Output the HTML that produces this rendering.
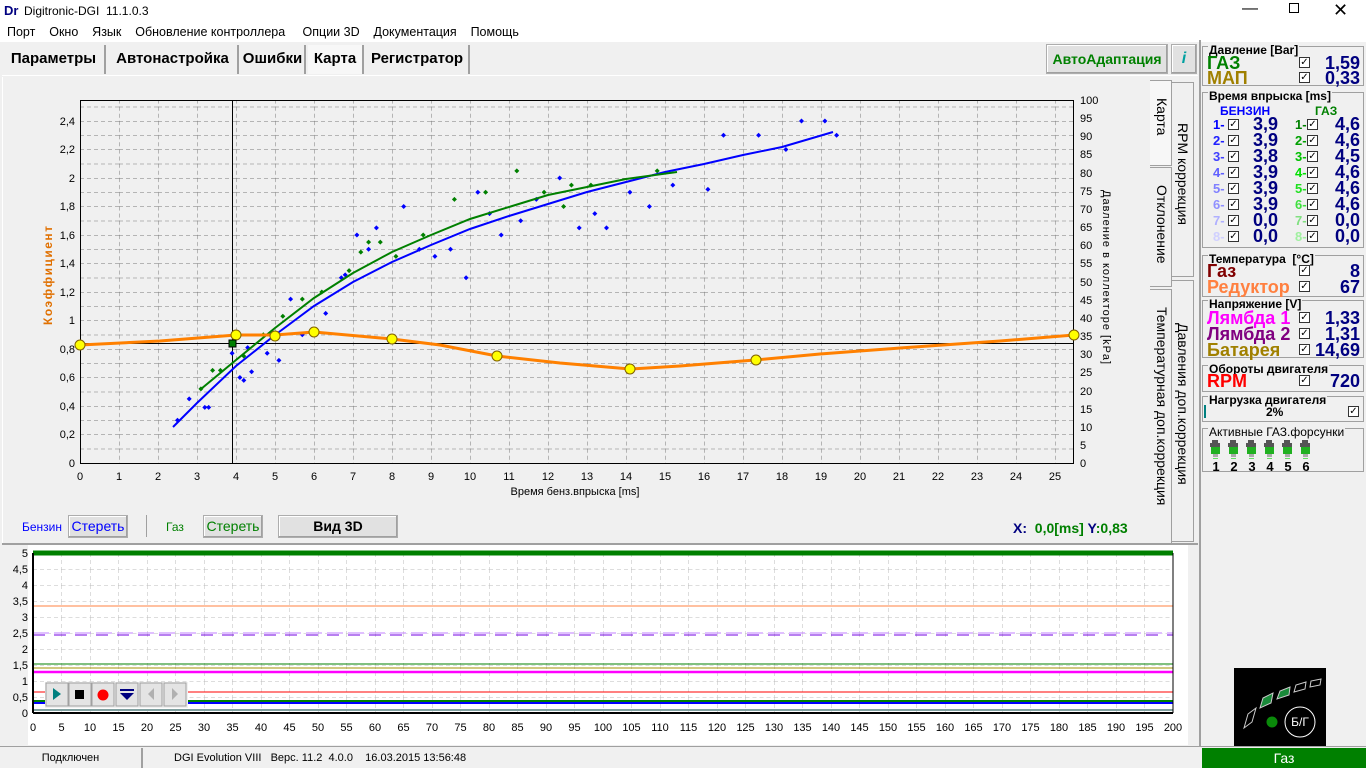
<!DOCTYPE html>
<html><head><meta charset="utf-8"><style>
*{margin:0;padding:0;box-sizing:border-box}
body{width:1366px;height:768px;overflow:hidden;background:#f0f0f0;font-family:"Liberation Sans",sans-serif;position:relative;font-size:12px}
.a{position:absolute}
.btn{position:absolute;background:#e1e1e1;border:1px solid #adadad;box-shadow:inset -1px -1px #a0a0a0,inset 1px 1px #fff;text-align:center}
.tab{position:absolute;top:45px;height:29px;font-weight:bold;font-size:15px;line-height:28px;border-right:2px solid #a0a0a0;text-align:center;color:#000}
.grp{position:absolute;left:1202px;width:162px;border:1px solid #a0a0a0}
.gt{position:absolute;top:-3px;left:5px;background:#f0f0f0;font-weight:bold;font-size:12px;line-height:12px;padding:0 1px}
.cb{position:absolute;width:11px;height:11px;border:1px solid #333;background:#fff;font-size:10px;line-height:9px;text-align:center}
.big{position:absolute;font-size:18px;font-weight:bold;line-height:17px}
.num{position:absolute;font-size:18px;font-weight:bold;color:#000080;line-height:17px;text-align:right}
.vt{position:absolute;writing-mode:vertical-rl;font-size:14px}
</style></head><body>
<div class="a" style="left:0;top:0;width:1366px;height:22px;background:#fff"></div>
<div class="a" style="left:4px;top:3px;font-weight:bold;color:#000080;font-size:13px">Dr</div>
<div class="a" style="left:24px;top:4px;font-size:12px">Digitronic-DGI&nbsp; 11.1.0.3</div>
<div class="a" style="left:1242px;top:0;font-size:16px">&#8212;</div>
<div class="a" style="left:1289px;top:3px;width:10px;height:10px;border:1px solid #000"></div>
<div class="a" style="left:1333px;top:0;font-size:18px">&#10005;</div>
<div class="a" style="left:0;top:22px;width:1366px;height:20px;background:#fff"></div>
<div class="a" style="left:7px;top:25px;font-size:12.5px;word-spacing:0">Порт&nbsp;&nbsp;&nbsp; Окно&nbsp;&nbsp;&nbsp; Язык&nbsp;&nbsp;&nbsp; Обновление контроллера&nbsp;&nbsp;&nbsp;&nbsp; Опции 3D&nbsp;&nbsp;&nbsp; Документация&nbsp;&nbsp;&nbsp; Помощь</div>
<div class="tab" style="left:3px;width:103px">Параметры</div>
<div class="tab" style="left:108px;width:131px">Автонастройка</div>
<div class="tab" style="left:241px;width:65px">Ошибки</div>
<div class="tab" style="left:308px;width:56px;background:#f7f7f7">Карта</div>
<div class="tab" style="left:366px;width:104px">Регистратор</div>
<div class="a" style="left:2px;top:75px;width:1196px;height:1px;background:#fff"></div>
<div class="btn" style="left:1046px;top:44px;width:122px;height:30px;color:#008000;font-weight:bold;font-size:14px;line-height:28px">АвтоАдаптация</div>
<div class="btn" style="left:1171px;top:44px;width:26px;height:30px;color:#00a0a0;font-weight:bold;font-style:italic;font-size:16px;line-height:28px">i</div>
<div class="a" style="left:2px;top:77px;width:1148px;height:466px;border-left:1px solid #fff"></div>
<div class="a" style="left:1150px;top:80px;width:22px;height:86px;background:#f7f7f7;border:1px solid #a0a0a0;border-left:none"></div>
<div class="vt" style="left:1154px;top:98px">Карта</div>
<div class="a" style="left:1172px;top:82px;width:22px;height:195px;border:1px solid #a0a0a0;border-left:none"></div>
<div class="vt" style="left:1175px;top:123px">RPM коррекция</div>
<div class="a" style="left:1150px;top:167px;width:22px;height:120px;border:1px solid #a0a0a0;border-left:none"></div>
<div class="vt" style="left:1154px;top:185px">Отклонение</div>
<div class="a" style="left:1150px;top:289px;width:22px;height:255px;border:1px solid #a0a0a0;border-left:none"></div>
<div class="vt" style="left:1154px;top:307px">Температурная доп.коррекция</div>
<div class="a" style="left:1172px;top:280px;width:22px;height:262px;border:1px solid #a0a0a0;border-left:none"></div>
<div class="vt" style="left:1175px;top:323px">Давления доп.коррекция</div>

<svg class="a" style="left:0;top:0" width="1150" height="545">
<defs>
<pattern id="g" x="80" y="463" width="39" height="14.25" patternUnits="userSpaceOnUse">
<line x1="0" y1="0" x2="39" y2="0" stroke="#777" stroke-dasharray="4,3"/>
<line x1="0" y1="0" x2="0" y2="14.25" stroke="#777" stroke-dasharray="4,3"/>
</pattern>
</defs>
<rect x="80" y="100" width="994" height="363" fill="url(#g)"/>
<rect x="80.5" y="100.5" width="993" height="363" fill="none" stroke="#000"/>
<g font-size="11" fill="#000" text-anchor="middle">
<text x="80" y="480">0</text><text x="119" y="480">1</text><text x="158" y="480">2</text><text x="197" y="480">3</text><text x="236" y="480">4</text><text x="275" y="480">5</text><text x="314" y="480">6</text><text x="353" y="480">7</text><text x="392" y="480">8</text><text x="431" y="480">9</text><text x="470" y="480">10</text><text x="509" y="480">11</text><text x="548" y="480">12</text><text x="587" y="480">13</text><text x="626" y="480">14</text><text x="665" y="480">15</text><text x="704" y="480">16</text><text x="743" y="480">17</text><text x="782" y="480">18</text><text x="821" y="480">19</text><text x="860" y="480">20</text><text x="899" y="480">21</text><text x="938" y="480">22</text><text x="977" y="480">23</text><text x="1016" y="480">24</text><text x="1055" y="480">25</text>
</g>
<g font-size="11" text-anchor="end">
<text x="75" y="467">0</text><text x="75" y="438">0,2</text><text x="75" y="410">0,4</text><text x="75" y="381">0,6</text><text x="75" y="353">0,8</text><text x="75" y="324">1</text><text x="75" y="296">1,2</text><text x="75" y="267">1,4</text><text x="75" y="239">1,6</text><text x="75" y="210">1,8</text><text x="75" y="182">2</text><text x="75" y="153">2,2</text><text x="75" y="125">2,4</text>
</g>
<g font-size="11">
<text x="1080" y="467">0</text><text x="1080" y="449">5</text><text x="1080" y="431">10</text><text x="1080" y="413">15</text><text x="1080" y="395">20</text><text x="1080" y="376">25</text><text x="1080" y="358">30</text><text x="1080" y="340">35</text><text x="1080" y="322">40</text><text x="1080" y="304">45</text><text x="1080" y="286">50</text><text x="1080" y="267">55</text><text x="1080" y="249">60</text><text x="1080" y="231">65</text><text x="1080" y="213">70</text><text x="1080" y="195">75</text><text x="1080" y="177">80</text><text x="1080" y="158">85</text><text x="1080" y="140">90</text><text x="1080" y="122">95</text><text x="1080" y="104">100</text>
</g>
<text x="575" y="495" font-size="11" text-anchor="middle">Время бенз.впрыска [ms]</text>
<text transform="translate(52,325) rotate(-90)" font-size="12" font-weight="bold" fill="#e07000" letter-spacing="1.5">Коэффициент</text>
<text transform="translate(1103,190) rotate(90)" font-size="11" letter-spacing="1">Давление в коллекторе [kPa]</text>
<line x1="232.5" y1="100" x2="232.5" y2="463" stroke="#000"/>
<line x1="80" y1="343.5" x2="1074" y2="343.5" stroke="#000"/>
<g id="sc"></g>
<polyline fill="none" stroke="#0000ff" stroke-width="2" points="173,427 197,403 236,366 275,335 314,306 353,282 392,262 431,245 470,229 509,216 548,204 587,192 626,182 665,172 704,164 743,155 782,147 833,132"/>
<polyline fill="none" stroke="#008000" stroke-width="2" points="201,389 236,360 275,328 314,298 353,273 392,252 431,235 470,219 509,207 548,195 587,187 626,179 677,172"/>
<polyline fill="none" stroke="#ff8000" stroke-width="3" points="80,345 160,341 236,335 275,335 314,332 392,339 440,345 497,356 560,363 630,369 680,366 755,360 820,354 900,348 1000,341 1074,335"/>
<g fill="#ffff00" stroke="#806000"><circle cx="80" cy="345" r="5"/><circle cx="236" cy="335" r="5"/><circle cx="275" cy="336" r="5"/><circle cx="314" cy="332" r="5"/><circle cx="392" cy="339" r="5"/><circle cx="497" cy="356" r="5"/><circle cx="630" cy="369" r="5"/><circle cx="756" cy="360" r="5"/><circle cx="1074" cy="335" r="5"/></g>
<rect x="229" y="340" width="7" height="7" fill="#008000" stroke="#000"/>
</svg>
<script>
var s='',b=[[2.5,.3],[2.8,.45],[3.2,.39],[3.3,.39],[3.9,.77],[4.1,.6],[4.2,.58],[4.3,.81],[4.4,.64],[4.8,.77],[5.1,.72],[5.4,1.15],[5.7,.9],[6.3,1.05],[6.7,1.3],[7.1,1.6],[7.4,1.5],[7.6,1.65],[8.3,1.8],[9.1,1.45],[9.5,1.5],[9.9,1.3],[10.2,1.9],[10.8,1.6],[11.3,1.7],[11.7,1.85],[12.3,2],[12.8,1.65],[13.5,1.65],[14.1,1.9],[14.6,1.8],[15.2,1.95],[16.1,1.92],[16.5,2.3],[17.4,2.3],[18.1,2.2],[18.5,2.4],[19.1,2.4],[19.4,2.3],[6.8,1.32],[10.5,1.75],[13.2,1.75],[8.7,1.5]],g=[[3.1,.52],[3.4,.65],[3.6,.65],[4.2,.75],[4.7,.9],[5.2,1.03],[5.7,1.15],[6.2,1.2],[6.9,1.35],[7.4,1.55],[7.7,1.55],[8.1,1.45],[8.8,1.6],[9.6,1.85],[10.4,1.9],[11.2,2.05],[12.6,1.95],[13.1,1.95],[14.8,2.05],[11.9,1.9],[12.4,1.8],[7.2,1.48]];
function d(p,c){var x=80+39*p[0],y=463-142.5*p[1];return '<path d="M'+x+','+(y-2.5)+' l2.5,2.5 l-2.5,2.5 l-2.5,-2.5z" fill="'+c+'"/>';}
b.forEach(function(p){s+=d(p,'#0000ff')});g.forEach(function(p){s+=d(p,'#008000')});
document.getElementById('sc').innerHTML=s;
</script>
<div class="a" style="left:22px;top:520px;color:#0000ff;font-size:12px">Бензин</div>
<div class="btn" style="left:68px;top:515px;width:60px;height:23px;color:#0000ff;font-size:14px;line-height:21px">Стереть</div>
<div class="a" style="left:146px;top:515px;width:1px;height:22px;background:#a0a0a0"></div>
<div class="a" style="left:166px;top:520px;color:#008000;font-size:12px">Газ</div>
<div class="btn" style="left:203px;top:515px;width:60px;height:23px;color:#008000;font-size:14px;line-height:21px">Стереть</div>
<div class="btn" style="left:278px;top:515px;width:120px;height:23px;font-weight:bold;font-size:14px;line-height:21px">Вид 3D</div>
<div class="a" style="left:1013px;top:520px;font-size:14px;font-weight:bold;color:#008000"><span style="color:#000080">X:</span>&nbsp; 0,0[ms] <span style="color:#000080">Y</span>:0,83</div>

<div class="a" style="left:2px;top:543px;width:1196px;height:2px;background:#a0a0a0"></div>
<svg class="a" style="left:0;top:545px" width="1198" height="202">
<rect x="28" y="0" width="1160" height="200" fill="#fff"/>
<defs><pattern id="g2" x="33" y="8" width="28.5" height="16" patternUnits="userSpaceOnUse">
<line x1="0" y1="0" x2="28.5" y2="0" stroke="#bbb" stroke-dasharray="4,3"/>
<line x1="0" y1="0" x2="0" y2="16" stroke="#bbb" stroke-dasharray="4,3"/></pattern></defs>
<rect x="33" y="8" width="1140" height="160" fill="url(#g2)"/>
<line x1="33" y1="8" x2="1173" y2="8" stroke="#008000" stroke-width="5"/>
<line x1="33" y1="61" x2="1173" y2="61" stroke="#ff8040"/>
<line x1="33" y1="88" x2="1173" y2="88" stroke="#c080ff" stroke-dasharray="16,5"/>
<line x1="33" y1="90" x2="1173" y2="90" stroke="#7000e0" stroke-dasharray="12,9"/>
<line x1="33" y1="119" x2="1173" y2="119" stroke="#008000"/>
<line x1="33" y1="123" x2="1173" y2="123" stroke="#a09000"/>
<line x1="33" y1="127" x2="1173" y2="127" stroke="#ff00ff" stroke-width="2.5"/>
<line x1="33" y1="147" x2="1173" y2="147" stroke="#ff0000"/>
<line x1="33" y1="156" x2="1173" y2="156" stroke="#008000" stroke-width="2"/>
<line x1="33" y1="158" x2="1173" y2="158" stroke="#0000ff" stroke-width="2"/>
<line x1="33" y1="165" x2="1173" y2="165" stroke="#004040"/>
<line x1="33" y1="8" x2="33" y2="168" stroke="#000" stroke-width="2"/>
<line x1="33" y1="168" x2="1173" y2="168" stroke="#000" stroke-width="2"/>
<line x1="1173" y1="8" x2="1173" y2="168" stroke="#000"/>
<g font-size="11" text-anchor="end">
<text x="28" y="172">0</text><text x="28" y="156">0,5</text><text x="28" y="140">1</text><text x="28" y="124">1,5</text><text x="28" y="108">2</text><text x="28" y="92">2,5</text><text x="28" y="76">3</text><text x="28" y="60">3,5</text><text x="28" y="44">4</text><text x="28" y="28">4,5</text><text x="28" y="12">5</text>
</g>
<g font-size="11" text-anchor="middle">
<text x="33" y="186">0</text><text x="61.5" y="186">5</text><text x="90" y="186">10</text><text x="118.5" y="186">15</text><text x="147" y="186">20</text><text x="175.5" y="186">25</text><text x="204" y="186">30</text><text x="232.5" y="186">35</text><text x="261" y="186">40</text><text x="289.5" y="186">45</text><text x="318" y="186">50</text><text x="346.5" y="186">55</text><text x="375" y="186">60</text><text x="403.5" y="186">65</text><text x="432" y="186">70</text><text x="460.5" y="186">75</text><text x="489" y="186">80</text><text x="517.5" y="186">85</text><text x="546" y="186">90</text><text x="574.5" y="186">95</text><text x="603" y="186">100</text><text x="631.5" y="186">105</text><text x="660" y="186">110</text><text x="688.5" y="186">115</text><text x="717" y="186">120</text><text x="745.5" y="186">125</text><text x="774" y="186">130</text><text x="802.5" y="186">135</text><text x="831" y="186">140</text><text x="859.5" y="186">145</text><text x="888" y="186">150</text><text x="916.5" y="186">155</text><text x="945" y="186">160</text><text x="973.5" y="186">165</text><text x="1002" y="186">170</text><text x="1030.5" y="186">175</text><text x="1059" y="186">180</text><text x="1087.5" y="186">185</text><text x="1116" y="186">190</text><text x="1144.5" y="186">195</text><text x="1173" y="186">200</text>
</g>
<g>
<rect x="45" y="137" width="143" height="26" fill="#f0f0f0"/>
<rect x="46" y="138" width="22" height="23" fill="#e4e4e4" stroke="#a0a0a0"/><path d="M53,143 l8,6 l-8,6z" fill="#008080"/>
<rect x="69" y="138" width="22" height="23" fill="#e4e4e4" stroke="#a0a0a0"/><rect x="75" y="145" width="9" height="9" fill="#000"/>
<rect x="92" y="138" width="22" height="23" fill="#e4e4e4" stroke="#a0a0a0"/><circle cx="103" cy="150" r="5.5" fill="#ff0000"/>
<rect x="116" y="138" width="22" height="23" fill="#e4e4e4" stroke="#a0a0a0"/><rect x="120" y="144" width="14" height="2" fill="#000080"/><path d="M120,148 h14 l-7,7z" fill="#000080"/>
<rect x="140" y="138" width="22" height="23" fill="#e4e4e4" stroke="#a0a0a0"/><path d="M154,143 l-6,6 l6,6z" fill="#b0b0b0"/>
<rect x="164" y="138" width="22" height="23" fill="#e4e4e4" stroke="#a0a0a0"/><path d="M172,143 l6,6 l-6,6z" fill="#b0b0b0"/>
</g>
</svg>

<div class="a" style="left:0;top:746px;width:1366px;height:22px;background:#f0f0f0;border-top:1px solid #a0a0a0"></div>
<div class="a" style="left:0;top:748px;width:143px;height:20px;border-right:2px solid #a0a0a0;text-align:center;font-size:11px;line-height:20px">Подключен</div>
<div class="a" style="left:174px;top:752px;font-size:11px">DGI Evolution VIII&nbsp;&nbsp; Верс. 11.2&nbsp; 4.0.0&nbsp;&nbsp;&nbsp; 16.03.2015 13:56:48</div>
<div class="a" style="left:1202px;top:748px;width:164px;height:20px;background:#008000;color:#fff;text-align:center;font-size:14px;line-height:20px">Газ</div>

<div class="a" style="left:1199px;top:40px;width:2px;height:706px;background:#a0a0a0"></div>
<div class="grp" style="top:46px;height:40px"><div class="gt">Давление [Bar]</div></div>
<div class="big" style="left:1207px;top:55px;color:#008000">ГАЗ</div><div class="cb" style="left:1299px;top:57px">✓</div><div class="num" style="left:1310px;top:55px;width:50px">1,59</div>
<div class="big" style="left:1207px;top:70px;color:#a08000">МАП</div><div class="cb" style="left:1299px;top:72px">✓</div><div class="num" style="left:1310px;top:70px;width:50px">0,33</div>

<div class="grp" style="top:92px;height:156px"><div class="gt">Время впрыска [ms]</div></div>
<div class="a" style="left:1220px;top:104px;font-weight:bold;color:#0000ff;font-size:12px">БЕНЗИН</div>
<div class="a" style="left:1315px;top:104px;font-weight:bold;color:#008000;font-size:12px">ГАЗ</div>
<div class="a" style="left:1213px;top:117px;line-height:16px;font-size:13px;font-weight:bold">
<div style="color:#0000ff">1-</div><div style="color:#2020ff">2-</div><div style="color:#4040ff">3-</div><div style="color:#6060ff">4-</div><div style="color:#8080ff">5-</div><div style="color:#9090ff">6-</div><div style="color:#b0b0ff">7-</div><div style="color:#d0d0ff">8-</div></div>
<div class="a" style="left:1295px;top:117px;line-height:16px;font-size:13px;font-weight:bold">
<div style="color:#008000">1-</div><div style="color:#00a000">2-</div><div style="color:#00c000">3-</div><div style="color:#00e000">4-</div><div style="color:#20e020">5-</div><div style="color:#40e040">6-</div><div style="color:#80e080">7-</div><div style="color:#a0f0a0">8-</div></div>
<div class="a" style="left:1246px;top:116px;width:32px;text-align:right;line-height:16px;font-size:18px;font-weight:bold;color:#000080"><div>3,9</div><div>3,9</div><div>3,8</div><div>3,9</div><div>3,9</div><div>3,9</div><div>0,0</div><div>0,0</div></div>
<div class="a" style="left:1326px;top:116px;width:34px;text-align:right;line-height:16px;font-size:18px;font-weight:bold;color:#000080"><div>4,6</div><div>4,6</div><div>4,5</div><div>4,6</div><div>4,6</div><div>4,6</div><div>0,0</div><div>0,0</div></div>
<div class="cb" style="left:1228px;top:119px">✓</div><div class="cb" style="left:1228px;top:135px">✓</div><div class="cb" style="left:1228px;top:151px">✓</div><div class="cb" style="left:1228px;top:167px">✓</div><div class="cb" style="left:1228px;top:183px">✓</div><div class="cb" style="left:1228px;top:199px">✓</div><div class="cb" style="left:1228px;top:215px">✓</div><div class="cb" style="left:1228px;top:231px">✓</div>
<div class="cb" style="left:1307px;top:119px">✓</div><div class="cb" style="left:1307px;top:135px">✓</div><div class="cb" style="left:1307px;top:151px">✓</div><div class="cb" style="left:1307px;top:167px">✓</div><div class="cb" style="left:1307px;top:183px">✓</div><div class="cb" style="left:1307px;top:199px">✓</div><div class="cb" style="left:1307px;top:215px">✓</div><div class="cb" style="left:1307px;top:231px">✓</div>

<div class="grp" style="top:255px;height:42px"><div class="gt">Температура&nbsp; [°C]</div></div>
<div class="big" style="left:1207px;top:263px;color:#800000">Газ</div><div class="cb" style="left:1299px;top:265px">✓</div><div class="num" style="left:1310px;top:263px;width:50px">8</div>
<div class="big" style="left:1207px;top:279px;color:#ff8040">Редуктор</div><div class="cb" style="left:1299px;top:281px">✓</div><div class="num" style="left:1310px;top:279px;width:50px">67</div>

<div class="grp" style="top:300px;height:58px"><div class="gt">Напряжение [V]</div></div>
<div class="big" style="left:1207px;top:310px;color:#ff00ff">Лямбда 1</div><div class="cb" style="left:1299px;top:312px">✓</div><div class="num" style="left:1310px;top:310px;width:50px">1,33</div>
<div class="big" style="left:1207px;top:326px;color:#800080">Лямбда 2</div><div class="cb" style="left:1299px;top:328px">✓</div><div class="num" style="left:1310px;top:326px;width:50px">1,31</div>
<div class="big" style="left:1207px;top:342px;color:#a08000">Батарея</div><div class="cb" style="left:1299px;top:344px">✓</div><div class="num" style="left:1310px;top:342px;width:50px">14,69</div>

<div class="grp" style="top:365px;height:27px"><div class="gt">Обороты двигателя</div></div>
<div class="big" style="left:1207px;top:373px;color:#ff0000">RPM</div><div class="cb" style="left:1299px;top:375px">✓</div><div class="num" style="left:1310px;top:373px;width:50px">720</div>

<div class="grp" style="top:396px;height:26px"><div class="gt">Нагрузка двигателя</div></div>
<div class="a" style="left:1204px;top:405px;width:2px;height:13px;background:#008080"></div>
<div class="a" style="left:1266px;top:405px;font-weight:bold;font-size:12px">2%</div>
<div class="cb" style="left:1348px;top:406px">✓</div>

<div class="grp" style="top:428px;height:44px"><div class="gt" style="font-weight:normal">Активные ГАЗ.форсунки</div></div>
<svg class="a" style="left:1207px;top:438px" width="110" height="34">
<g id="fj"></g>
<g font-size="13" font-weight="bold" text-anchor="middle"><text x="9" y="33">1</text><text x="27" y="33">2</text><text x="45" y="33">3</text><text x="63" y="33">4</text><text x="81" y="33">5</text><text x="99" y="33">6</text></g>
</svg>
<script>
var f='';for(var i=0;i<6;i++){var x=3+18*i;f+='<rect x="'+(x+2)+'" y="2" width="6" height="3" fill="#555"/><rect x="'+x+'" y="5" width="10" height="4" fill="#555"/><rect x="'+(x+1)+'" y="9" width="9" height="7" fill="#20b020"/><rect x="'+(x+3)+'" y="16" width="5" height="3" fill="#aaa"/><rect x="'+(x+3)+'" y="20" width="5" height="1" fill="#6d6"/>';}
document.getElementById('fj').innerHTML=f;
</script>

<svg class="a" style="left:1234px;top:668px" width="92" height="78">
<rect width="92" height="78" fill="#000"/>
<path d="M10,60 l4,-14 l8,-6 l-4,14z" fill="none" stroke="#ccc"/>
<path d="M26,40 l3,-10 l10,-5 l-2,10z" fill="#1a8a3a" stroke="#ccc"/>
<path d="M43,31 l3,-8 l10,-4 l-1,8z" fill="#1a8a3a" stroke="#ccc"/>
<path d="M60,24 l2,-7 l10,-3 l-1,7z" fill="none" stroke="#ccc"/>
<path d="M76,19 l1,-6 l10,-2 l-1,6z" fill="none" stroke="#ccc"/>
<circle cx="38" cy="54" r="5.5" fill="#0a8a0a"/>
<circle cx="66" cy="54" r="15" fill="none" stroke="#fff"/>
<text x="66" y="58" fill="#fff" font-size="12" text-anchor="middle">Б/Г</text>
</svg>
</body></html>
